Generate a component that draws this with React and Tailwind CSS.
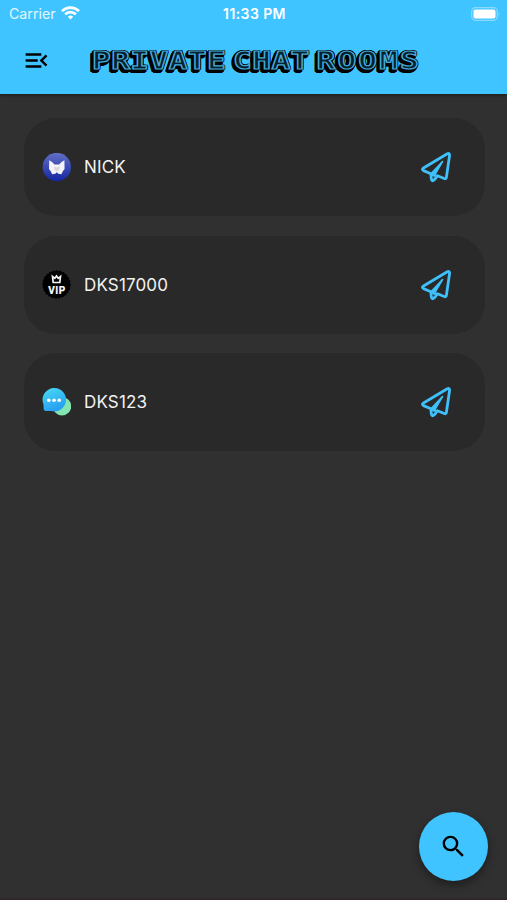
import { MdMenuOpen, MdSearch } from "react-icons/md";

function FoxAvatar() {
  return (
    <svg className="w-[29px] h-[29px]" viewBox="0 0 29 29">
      <defs>
        <linearGradient id="fox" x1="0" y1="0" x2="0" y2="1">
          <stop offset="0" stopColor="#626fc4" />
          <stop offset="0.5" stopColor="#3c4bb4" />
          <stop offset="1" stopColor="#1426a4" />
        </linearGradient>
      </defs>
      <circle cx="14.8" cy="14" r="14.2" fill="url(#fox)" />
      <path d="M7.2 7.3q3 1.2 5.3 4.2h4.6q2.3-3 5.3-4.2l.2 8.8-1.6 1.8-1.6 3.3-3.1-.4-1.5-1.6-1.5 1.6-3.1.4-1.6-3.3L7 16.1z" fill="#f3f3f8" />
      <path d="M11.8 13.5l3 1 3-1-.6 3.2-2.4 1.8-2.4-1.8z" fill="#d8d8dc" />
    </svg>
  );
}

function VipAvatar() {
  return (
    <svg className="w-[29px] h-[29px]" viewBox="0 0 29 29">
      <circle cx="14.5" cy="14.5" r="13.6" fill="#000" stroke="#000" strokeWidth="1.2" strokeDasharray="2 1.5" />
      <path d="M10.5 6.5l2.3 1.8 1.7-2.3 1.7 2.3 2.3-1.8-.7 6h-6.6z" fill="none" stroke="#f4f4f4" strokeWidth="1.7" />
      <text x="15" y="23.6" textAnchor="middle" className="font-['Roboto',sans-serif] font-bold text-[10px] tracking-[0.6px]" fill="#fff" stroke="#fff" strokeWidth="0.2">VIP</text>
    </svg>
  );
}

function ChatAvatar() {
  return (
    <svg className="w-[29px] h-[29px]" viewBox="0 0 29 29">
      <defs>
        <linearGradient id="bubble" x1="0" y1="0" x2="0.4" y2="1">
          <stop offset="0" stopColor="#48dcf2" />
          <stop offset="1" stopColor="#279ff2" />
        </linearGradient>
      </defs>
      <circle cx="20" cy="18.3" r="9.2" fill="#83e6b1" />
      <path d="M12.3 0a11.7 11.7 0 1 1-3 23l-6-.1q-1.6-.2-1.6-1.6l-.2-4.9A11.7 11.7 0 0 1 12.3 0z" fill="url(#bubble)" />
      <circle cx="6.8" cy="12.3" r="1.8" fill="#fff" />
      <circle cx="12" cy="12.3" r="1.8" fill="#fff" />
      <circle cx="17.2" cy="12.3" r="1.8" fill="#fff" />
    </svg>
  );
}

function PlaneIcon() {
  return (
    <svg className="w-8 h-8" viewBox="0 0 32 32" fill="none" stroke="#3fc0fb" strokeWidth="2.8" strokeLinejoin="round" strokeLinecap="round">
      <path d="M27.3 2.8q2.5-1.2 2.3 1.5l-3.2 22q-.3 2-2.2 1.2l-6.7-2.7-3.2 4q-2.4 2.3-3-1l-.4-5-7.4-3.2q-2.2-1.3 0-2.6z" />
      <path d="M22.5 10.5L11 22.8l3 2.2z" fill="#3fc0fb" strokeWidth="1.6" />
      <path d="M13.3 24.3l4.2.5" strokeWidth="2" />
    </svg>
  );
}

const rooms = [
  { name: "NICK", avatar: <FoxAvatar /> },
  { name: "DKS17000", avatar: <VipAvatar /> },
  { name: "DKS123", avatar: <ChatAvatar /> },
];

function RoomCard({ name, avatar }) {
  return (
    <li className="flex items-center h-[98px] pl-[18px] pr-[33px] rounded-[32px] bg-[#292929]">
      {avatar}
      <span className="ml-[13px] text-[17px] leading-6 tracking-[0.15px] text-[#f2f2f2]">{name}</span>
      <button className="ml-auto" aria-label="Open room">
        <PlaneIcon />
      </button>
    </li>
  );
}

function StatusBar() {
  return (
    <div className="grid grid-cols-3 items-center h-[27px] pl-[9px] pr-[6px] text-white">
      <div className="flex items-center gap-[5.5px] text-[14.2px] text-white/85">
        Carrier
        <svg className="w-[19px] h-[14px]" viewBox="0 0 19 14" fill="none" stroke="#fff" strokeWidth="2.7">
          <path d="M1 5.1a12.2 12.2 0 0 1 17 0" />
          <path d="M4.1 8.3a7.8 7.8 0 0 1 10.8 0" />
          <path d="M9.5 13.5l-2.7-2.8q2.7-2.2 5.4 0z" fill="#fff" stroke="none" />
        </svg>
      </div>
      <span className="pr-px text-center text-[14px] font-semibold tracking-[0.4px] whitespace-nowrap">11:33 PM</span>
      <svg className="justify-self-end w-[30px] h-[14px]" viewBox="0 0 30 14">
        <rect x="0.7" y="0.7" width="25.6" height="12.6" rx="3.8" fill="none" stroke="#fff" strokeOpacity="0.4" strokeWidth="1.2" />
        <rect x="2.5" y="2.5" width="22" height="9" rx="2" fill="#fff" />
        <path d="M27.8 5q1.6 2 0 4z" fill="#fff" fillOpacity="0.5" />
      </svg>
    </div>
  );
}

export default function App() {
  return (
    <div className="relative flex flex-col w-full h-[900px] overflow-hidden border-b-2 border-[#2f272b] bg-[#303030] font-['Inter','Liberation_Sans',sans-serif]">
      <header className="h-[94px] bg-[#40c4ff] shadow-[0_1px_3px_rgba(0,0,0,0.5)]">
        <StatusBar />
        <div className="flex items-center h-[67px] pl-[22px]">
          <button aria-label="Open menu">
            <MdMenuOpen className="w-[29px] h-[29px] text-black" />
          </button>
          {/* the stacked shadows give the letters their outline and the block behind them */}
          <h1 className="ml-[41px] origin-left scale-x-[1.3] whitespace-nowrap font-['DejaVu_Sans_Mono',monospace] font-bold text-[24px] leading-7 tracking-[0.3px] [word-spacing:-9.5px] text-[#06202e] [-webkit-text-stroke:1.2px_#45a9d6] [text-shadow:1px_0_#000,1px_-1px_#000,1px_1px_#000,0_-1px_#000,0_1px_#000,-1px_-1px_#000,-1px_0_#000,-1px_1px_#000,-2px_0_#000,-2px_1px_#000,-2px_2px_#000,-3px_2px_#000,-3px_3px_#000,-2px_4px_#000,-1px_4px_#000,-2px_3px_#000,-1px_3px_#000,0_2px_#000,0_3px_#000]">
            PRIVATE CHAT <span className="tracking-[1.6px]">ROOMS</span>
          </h1>
        </div>
      </header>

      <ul className="flex flex-col gap-[19.5px] pt-6 pl-6 pr-[22px]">
        {rooms.map((room) => (
          <RoomCard key={room.name} name={room.name} avatar={room.avatar} />
        ))}
      </ul>

      <button
        className="absolute right-[19px] bottom-[17px] flex items-center justify-center w-[69px] h-[69px] rounded-full bg-[#40c4ff] shadow-[0_4px_10px_rgba(0,0,0,0.4)]"
        aria-label="Search rooms"
      >
        <MdSearch className="w-[29px] h-[29px] text-black" />
      </button>
    </div>
  );
}
